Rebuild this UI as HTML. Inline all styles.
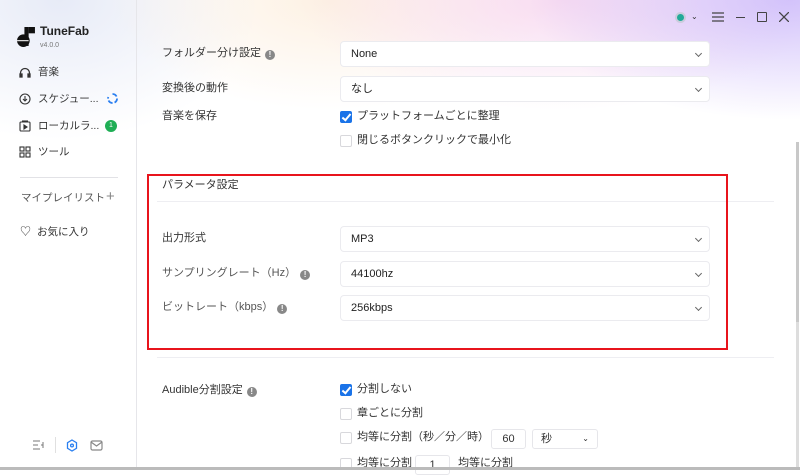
<!DOCTYPE html>
<html><head><meta charset="utf-8"><style>
*{box-sizing:border-box;margin:0;padding:0}
body{width:800px;height:470px;overflow:hidden;font-family:"Liberation Sans","Noto Sans CJK JP",sans-serif;font-size:11px;line-height:13px;color:#333;position:relative;background:#fff}
.bg{position:absolute;inset:0;background:
radial-gradient(ellipse 260px 120px at 790px 0px,rgba(200,180,250,.8),transparent),
radial-gradient(ellipse 260px 110px at 560px 0px,rgba(245,205,235,.7),transparent),
radial-gradient(ellipse 220px 110px at 330px 0px,rgba(252,235,215,.7),transparent),
radial-gradient(ellipse 200px 140px at 60px 0px,rgba(225,230,245,.8),transparent);}
.side{position:absolute;left:0;top:0;width:137px;height:470px;border-right:1px solid #e6e6ea}
.a{position:absolute;white-space:nowrap}
.dd{position:absolute;left:340px;width:370px;height:26px;background:#fff;border:1px solid #ebebef;border-radius:4px;padding-left:10px;line-height:24px;font-size:11px;color:#222}
.dd:after{content:"";position:absolute;right:8px;top:9px;width:4px;height:4px;border-right:1px solid #666;border-bottom:1px solid #666;transform:rotate(45deg)}
.lb{position:absolute;left:162px;color:#333;font-size:11px;white-space:nowrap}
.i{display:inline-block;width:10px;height:10px;border-radius:50%;background:#888;color:#fff;font-size:8px;line-height:10px;text-align:center;font-weight:bold;vertical-align:-1px;margin-left:4px}
.cb{position:absolute;left:340px;width:12px;height:12px;border:1px solid #d8d8dc;border-radius:2px;background:#fff}
.cb.on{background:#1a73e8;border-color:#1a73e8}
.cb.on:after{content:"";position:absolute;left:3px;top:0px;width:3px;height:7px;border-right:2px solid #fff;border-bottom:2px solid #fff;transform:rotate(40deg)}
.ct{position:absolute;left:357px;font-size:11px;white-space:nowrap}
.nav{position:absolute;left:21px;font-size:10.5px;color:#333;white-space:nowrap}
</style></head><body>
<div class="bg"></div>
<div class="side">
 <svg class="a" style="left:16px;top:27px" width="20" height="20" viewBox="0 0 19 19"><rect x="8" y="0" width="4" height="18" fill="#111"/><rect x="12" y="0" width="6" height="6" fill="#111"/><circle cx="7" cy="13" r="6" fill="#111"/><line x1="1" y1="13" x2="12" y2="13" stroke="#fff" stroke-width="1"/></svg>
 <div class="a" style="left:40px;top:25px;font-size:12px;font-weight:bold;color:#222">TuneFab</div>
 <div class="a" style="left:40px;top:39px;font-size:7px;color:#777">v4.0.0</div>
 <svg class="a" style="left:19px;top:67px" width="12" height="11" viewBox="0 0 12 11" fill="none" stroke="#333" stroke-width="1.3"><path d="M1.5 10V6a4.5 4.5 0 0 1 9 0v4"/><rect x="1" y="7" width="2" height="3" fill="#333"/><rect x="9" y="7" width="2" height="3" fill="#333"/></svg>
 <div class="nav" style="left:38px;top:66px">音楽</div>
 <svg class="a" style="left:19px;top:93px" width="12" height="12" viewBox="0 0 12 12" fill="none" stroke="#333" stroke-width="1.1"><circle cx="6" cy="6" r="5"/><path d="M6 3v5M4 6l2 2 2-2"/></svg>
 <div class="nav" style="left:38px;top:93px">スケジュー...</div>
 <svg class="a" style="left:107px;top:93px" width="11" height="11" viewBox="0 0 11 11" fill="none" stroke="#2a7ff0" stroke-width="1.8"><path d="M5.5 1a4.5 4.5 0 1 1-4.2 3" stroke-dasharray="5 2"/></svg>
 <svg class="a" style="left:19px;top:120px" width="12" height="12" viewBox="0 0 12 12" fill="none" stroke="#333" stroke-width="1.1"><rect x="1" y="2" width="10" height="9" rx="1"/><path d="M3 1h6"/><path d="M5 5v4l3-2z" fill="#333"/></svg>
 <div class="nav" style="left:38px;top:120px">ローカルラ...</div>
 <div class="a" style="left:105px;top:120px;width:12px;height:12px;border-radius:50%;background:#1fae55;color:#fff;font-size:7px;line-height:12px;text-align:center">1</div>
 <svg class="a" style="left:19px;top:146px" width="12" height="12" viewBox="0 0 12 12" fill="none" stroke="#333" stroke-width="1.1"><rect x="1" y="1" width="4" height="4"/><rect x="7" y="1" width="4" height="4"/><rect x="1" y="7" width="4" height="4"/><rect x="7" y="7" width="4" height="4"/></svg>
 <div class="nav" style="left:38px;top:146px">ツール</div>
 <div class="a" style="left:20px;top:177px;width:98px;height:1px;background:#e2e2e6"></div>
 <div class="nav" style="left:21px;top:192px;color:#555">マイプレイリスト</div>
 <div class="a" style="left:106px;top:189px;font-size:15px;line-height:16px;color:#888">+</div>
 <div class="a" style="left:20px;top:226px;font-size:11px;color:#333">♡</div>
 <div class="nav" style="left:37px;top:226px">お気に入り</div>
 <svg class="a" style="left:33px;top:440px" width="11" height="10" viewBox="0 0 11 10" fill="none" stroke="#777" stroke-width="1"><path d="M0 1h7M0 5h5M0 9h7M10 2v6M10 5l-2 0"/></svg>
 <div class="a" style="left:55px;top:437px;width:1px;height:16px;background:#e0e0e0"></div>
 <svg class="a" style="left:66px;top:439px" width="12" height="13" viewBox="0 0 12 13" fill="none" stroke="#2a7ff0" stroke-width="1.3"><path d="M6 1l4.5 2.7v5.6L6 12 1.5 9.3V3.7z"/><circle cx="6" cy="6.5" r="1.4"/></svg>
 <svg class="a" style="left:90px;top:440px" width="13" height="11" viewBox="0 0 13 11" fill="none" stroke="#888" stroke-width="1.2"><rect x="1" y="1" width="11" height="9" rx="1.5"/><path d="M1 2l5.5 4L12 2"/></svg>
</div>
<div class="a" style="left:675px;top:12px;width:11px;height:11px;border-radius:50%;background:#2a9;border:2px solid #ccd"></div>
<div class="a" style="left:691px;top:10px;font-size:8px;color:#333">⌄</div>
<svg class="a" style="left:712px;top:12px" width="12" height="10" viewBox="0 0 12 10" stroke="#444" stroke-width="1.3"><path d="M0 1h12M0 5h12M0 9h12"/></svg>
<div class="a" style="left:736px;top:17px;width:9px;height:1.3px;background:#444"></div>
<div class="a" style="left:757px;top:12px;width:10px;height:10px;border:1.3px solid #444;border-radius:1px"></div>
<svg class="a" style="left:779px;top:12px" width="10" height="10" viewBox="0 0 10 10" stroke="#444" stroke-width="1.3"><path d="M0 0l10 10M10 0L0 10"/></svg>
<div class="a" style="left:796px;top:142px;width:3px;height:328px;background:#ddd"></div>
<div class="a" style="left:796px;top:142px;width:3px;height:180px;background:#c8c8c8"></div>

<div class="lb" style="top:47px">フォルダー分け設定<span class="i">!</span></div>
<div class="dd" style="top:41px">None</div>
<div class="lb" style="top:82px">変換後の動作</div>
<div class="dd" style="top:76px">なし</div>
<div class="lb" style="top:110px">音楽を保存</div>
<div class="cb on" style="top:111px"></div><div class="ct" style="top:110px">プラットフォームごとに整理</div>
<div class="cb" style="top:135px"></div><div class="ct" style="top:134px">閉じるボタンクリックで最小化</div>

<div class="a" style="left:157px;top:201px;width:617px;height:1px;background:#eeeef2"></div>
<div class="lb" style="top:179px">パラメータ設定</div>
<div class="lb" style="top:232px">出力形式</div>
<div class="dd" style="top:226px">MP3</div>
<div class="lb" style="top:267px;color:#555">サンプリングレート（Hz）<span class="i">!</span></div>
<div class="dd" style="top:261px">44100hz</div>
<div class="lb" style="top:301px;color:#555">ビットレート（kbps）<span class="i">!</span></div>
<div class="dd" style="top:295px">256kbps</div>
<div class="a" style="left:147px;top:174px;width:581px;height:176px;border:2px solid #e8141c"></div>
<div class="a" style="left:157px;top:357px;width:617px;height:1px;background:#eeeef2"></div>

<div class="lb" style="top:384px">Audible分割設定<span class="i">!</span></div>
<div class="cb on" style="top:384px"></div><div class="ct" style="top:383px">分割しない</div>
<div class="cb" style="top:408px"></div><div class="ct" style="top:407px">章ごとに分割</div>
<div class="cb" style="top:432px"></div><div class="ct" style="top:431px">均等に分割（秒／分／時）</div>
<div class="a" style="left:491px;top:429px;width:35px;height:20px;border:1px solid #e6e6ea;border-radius:3px;text-align:center;line-height:18px">60</div>
<div class="a" style="left:532px;top:429px;width:66px;height:20px;border:1px solid #e6e6ea;border-radius:3px;padding-left:8px;line-height:18px">秒<span style="position:absolute;right:8px;font-size:8px">⌄</span></div>
<div class="cb" style="top:458px"></div><div class="ct" style="top:457px">均等に分割</div>
<div class="a" style="left:415px;top:455px;width:35px;height:20px;border:1px solid #e6e6ea;border-radius:3px;text-align:center;line-height:18px">1</div>
<div class="a" style="left:458px;top:457px">均等に分割</div>
<div class="a" style="left:0;top:467px;width:800px;height:3px;background:#bbb"></div>
</body></html>
